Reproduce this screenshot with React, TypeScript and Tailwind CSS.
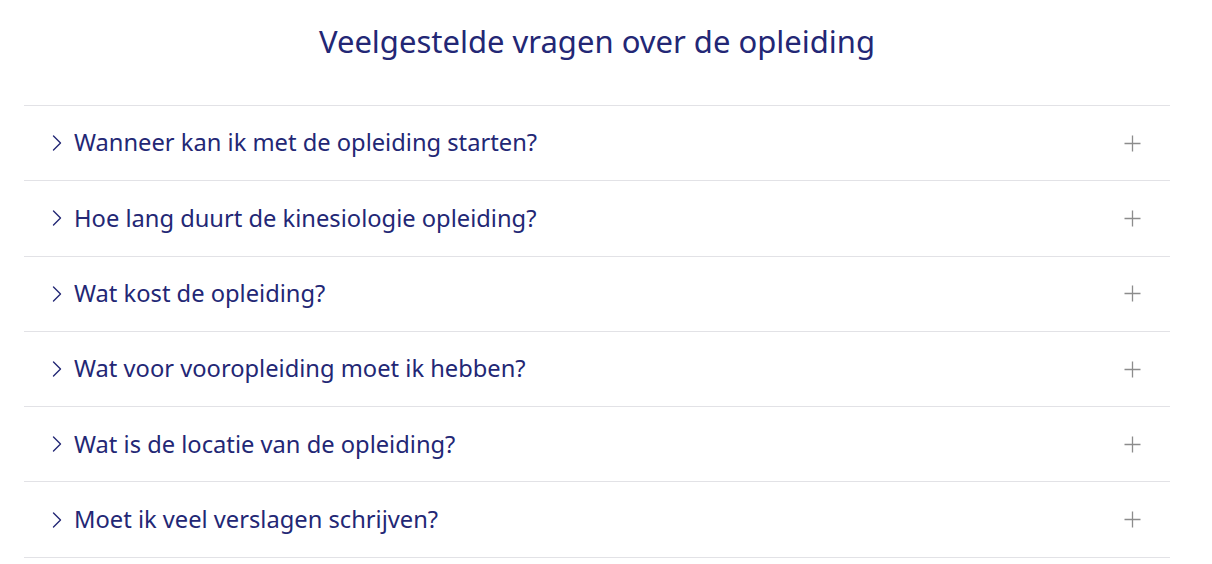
const questions = [
  'Wanneer kan ik met de opleiding starten?',
  'Hoe lang duurt de kinesiologie opleiding?',
  'Wat kost de opleiding?',
  'Wat voor vooropleiding moet ik hebben?',
  'Wat is de locatie van de opleiding?',
  'Moet ik veel verslagen schrijven?',
];

function Chevron() {
  return (
    <svg width="10" height="18" viewBox="0 0 10 18" fill="none" aria-hidden="true">
      <path d="M1.5 2l7 7-7 7" stroke="currentColor" strokeWidth="1.4" strokeLinecap="round" strokeLinejoin="round" />
    </svg>
  );
}

function PlusIcon() {
  return (
    <svg width="17" height="17" viewBox="0 0 17 17" fill="none" aria-hidden="true" className="text-[#8c8c8c]">
      <path d="M8.5 0.5v16M0.5 8.5h16" stroke="currentColor" strokeWidth="1.3" />
    </svg>
  );
}

export default function App() {
  return (
    <div className="min-h-screen bg-white" style={{ fontFamily: '"Noto Sans", "Open Sans", sans-serif' }}>
      <div className="ml-[24px] w-[1146px]">
        <h2 className="h-[105px] pt-[21px] text-center text-[31px] leading-[40px] text-[#232775]">
          Veelgestelde vragen over de opleiding
        </h2>
        <div className="border-t border-[#e2e2e6]">
          {questions.map((q) => (
            <div
              key={q}
              className="flex h-[75.3px] items-center border-b border-[#e2e2e6] pl-[28px] pr-[29px]"
            >
              <span className="mr-[12px] text-[#232775]">
                <Chevron />
              </span>
              <span className="flex-1 text-[23.7px] text-[#232775]">{q}</span>
              <PlusIcon />
            </div>
          ))}
        </div>
      </div>
    </div>
  );
}
